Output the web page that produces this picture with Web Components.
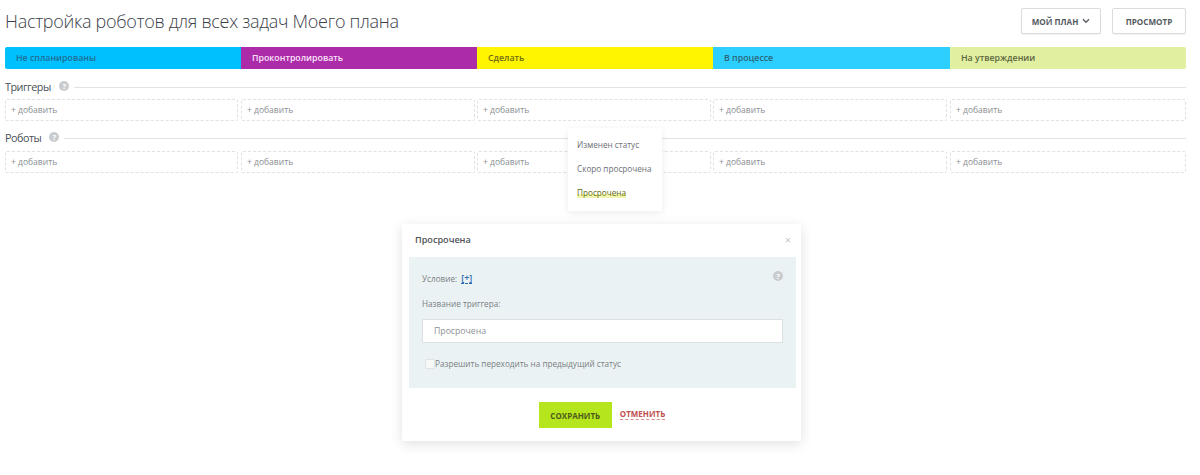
<!DOCTYPE html>
<html lang="ru">
<head>
<meta charset="utf-8">
<title>Настройка роботов</title>
<style>
html, body { margin: 0; background: #fff; }
body { width: 1200px; height: 475px; overflow: hidden; position: relative; font-family: "Open Sans", "Noto Sans", sans-serif; }
</style>
</head>
<body>
<robot-page>
  <page-header title="Настройка роботов для всех задач Моего плана"></page-header>
  <stage-bar></stage-bar>
  <robot-section label="Триггеры" style="--head-top:10px;--cells-top:6px"></robot-section>
  <robot-section label="Роботы" style="--head-top:9px;--cells-top:7px"></robot-section>
</robot-page>
<trigger-menu></trigger-menu>
<trigger-dialog></trigger-dialog>

<script>
const helpIcon = size => `<svg width="${size}" height="${size}" viewBox="0 0 10 10"><circle cx="5" cy="5" r="5" fill="#c9cccf"/><text x="5" y="7.6" font-size="7.5" font-weight="700" text-anchor="middle" fill="#fff" font-family="Open Sans, sans-serif">?</text></svg>`;

class RobotPage extends HTMLElement {
    connectedCallback() {
        this.attachShadow({ mode: 'open' });
        this.shadowRoot.innerHTML = `
            <style>
                :host { display: block; padding: 7px 14px 0 5px; }
            </style>
            <slot></slot>
        `;
    }
}

class PageHeader extends HTMLElement {
    connectedCallback() {
        this.attachShadow({ mode: 'open' });
        this.shadowRoot.innerHTML = `
            <style>
                :host { display: flex; justify-content: space-between; align-items: flex-start; height: 40px; }
                h1 { margin: 2px 0 0; font-size: 18px; letter-spacing: -0.3px; line-height: 24px; font-weight: 300; color: #3b4149; white-space: nowrap; }
                .buttons { display: flex; gap: 11px; }
                .btn {
                    height: 24px; margin-top: 1px; border: 1px solid #d9dcde; border-radius: 2px;
                    display: flex; align-items: center; justify-content: center; gap: 4px;
                    font-size: 8.1px; font-weight: 700; color: #555b61; background: #fff;
                    box-shadow: 0 1px 1px rgba(0,0,0,0.05);
                }
                .my { width: 78px; }
                .view { width: 72px; }
            </style>
            <h1>${this.getAttribute('title')}</h1>
            <div class="buttons">
                <div class="btn my">МОЙ ПЛАН
                    <svg width="8" height="6" viewBox="0 0 8 6"><path d="M1 1.3 L4 4.3 L7 1.3" fill="none" stroke="#555b61" stroke-width="1.3"/></svg>
                </div>
                <div class="btn view">ПРОСМОТР</div>
            </div>
        `;
    }
}

class StageBar extends HTMLElement {
    connectedCallback() {
        const stages = [
            ['Не спланированы', '#00c0fe', '#1f6f96'],
            ['Проконтролировать', '#ab2ba9', '#fbe3fb'],
            ['Сделать', '#fff500', '#6f6a12'],
            ['В процессе', '#2ccfff', '#2d6579'],
            ['На утверждении', '#e1f0a0', '#5d6640']
        ];
        this.attachShadow({ mode: 'open' });
        this.shadowRoot.innerHTML = `
            <style>
                :host { display: grid; grid-template-columns: 236px 236px 236px 237px 236px; height: 22px; border-radius: 2px; overflow: hidden; }
                div { display: flex; align-items: center; padding-left: 11px; font-size: 8.8px; font-weight: 600; white-space: nowrap; }
            </style>
            ${stages.map(s => `<div style="background:${s[1]};color:${s[2]}">${s[0]}</div>`).join('')}
        `;
    }
}

class AddCell extends HTMLElement {
    connectedCallback() {
        this.attachShadow({ mode: 'open' });
        this.shadowRoot.innerHTML = `
            <style>
                :host {
                    display: flex; align-items: center; height: 19px; padding: 0 0 1px 5px;
                    border: 1px dashed #dfe1e3; border-radius: 2px;
                    font-size: 8.5px; color: #8a8e92;
                }
            </style>
            + добавить
        `;
    }
}

class RobotSection extends HTMLElement {
    connectedCallback() {
        this.attachShadow({ mode: 'open' });
        this.shadowRoot.innerHTML = `
            <style>
                :host { display: block; }
                .head { display: flex; align-items: center; height: 14px; margin-top: var(--head-top); font-size: 10.8px; letter-spacing: -0.5px; color: #4a4f55; }
                .head svg { margin-left: 8px; }
                .line { flex: 1; height: 1px; background: #e1e3e5; margin: 2px 0 0 5px; }
                .cells { display: grid; grid-template-columns: 236px 236px 236px 237px 236px; margin-top: var(--cells-top); }
                add-cell { margin-right: 2px; }
                add-cell:first-child, add-cell:nth-child(4) { margin-right: 3px; }
                add-cell:last-child { margin-right: 0; }
            </style>
            <div class="head">${this.getAttribute('label')}${helpIcon(10)}<div class="line"></div></div>
            <div class="cells">
                <add-cell></add-cell><add-cell></add-cell><add-cell></add-cell><add-cell></add-cell><add-cell></add-cell>
            </div>
        `;
    }
}

class TriggerMenu extends HTMLElement {
    connectedCallback() {
        this.attachShadow({ mode: 'open' });
        this.shadowRoot.innerHTML = `
            <style>
                :host {
                    position: absolute; left: 568px; top: 128px; width: 94px; height: 83px; box-sizing: border-box;
                    padding: 4px 0 0 9px; background: #fff; box-shadow: 0 2px 8px rgba(0,0,0,0.08);
                    font-size: 8.2px; color: #6c7076; white-space: nowrap;
                }
                div { height: 24px; display: flex; align-items: center; }
                .on { color: #5f6a10; }
                .on span { background: linear-gradient(transparent 60%, #f2f7b0 60%); }
            </style>
            <div>Изменен статус</div>
            <div>Скоро просрочена</div>
            <div class="on"><span>Просрочена</span></div>
        `;
    }
}

class TriggerDialog extends HTMLElement {
    connectedCallback() {
        this.attachShadow({ mode: 'open' });
        this.shadowRoot.innerHTML = `
            <style>
                :host {
                    position: absolute; left: 402px; top: 224px; width: 399px; height: 217px;
                    background: #fff; box-shadow: 0 3px 12px rgba(0,0,0,0.12);
                    display: flex; flex-direction: column; color: #7a7f84;
                }
                .title { height: 31px; padding: 0 10px 2px 13px; display: flex; align-items: center; justify-content: space-between; font-size: 9.1px; font-weight: 600; color: #4f5459; }
                .close { color: #c6c8ca; font-size: 11px; font-weight: 400; }
                .body { margin: 0 5px 0 7px; height: 131px; box-sizing: border-box; background: #ebf2f3; padding: 15px 13px 0 13px; position: relative; font-size: 8.2px; }
                .help { position: absolute; right: 13px; top: 14px; line-height: 0; }
                .cond { display: flex; gap: 4px; align-items: center; height: 12px; }
                .cond a { color: #2a6bb0; font-size: 9px; font-weight: 600; border-bottom: 1px dashed #2a6bb0; line-height: 11px; }
                .name { margin-top: 14px; height: 12px; line-height: 12px; }
                .input { margin-top: 9px; height: 22px; background: #fff; border: 1px solid #dde1e3; display: flex; align-items: center; padding-left: 11px; font-size: 8.7px; color: #8c9095; }
                .check { display: flex; align-items: center; margin-top: 14px; margin-left: 3px; height: 12px; }
                .box { width: 8px; height: 8px; background: #f7f9f9; border: 1px solid #dfe3e5; border-radius: 1px; margin-top: 2px; }
                .foot { flex: 1; display: flex; align-items: flex-start; justify-content: center; gap: 8px; padding: 14px 0 0 1px; }
                .save { width: 73px; height: 26px; background: #b5e61d; display: flex; align-items: center; justify-content: center; font-size: 8px; font-weight: 700; color: #4d5a1a; }
                .cancel { margin-top: 6px; font-size: 8px; font-weight: 700; color: #c0504d; border-bottom: 1px dashed #d98b88; line-height: 11px; }
            </style>
            <div class="title">Просрочена<span class="close">×</span></div>
            <div class="body">
                <span class="help">${helpIcon(10)}</span>
                <div class="cond">Условие: <a>[+]</a></div>
                <div class="name">Название триггера:</div>
                <div class="input">Просрочена</div>
                <div class="check"><span class="box"></span>Разрешить переходить на предыдущий статус</div>
            </div>
            <div class="foot">
                <div class="save">СОХРАНИТЬ</div>
                <div class="cancel">ОТМЕНИТЬ</div>
            </div>
        `;
    }
}

customElements.define('robot-page', RobotPage);
customElements.define('page-header', PageHeader);
customElements.define('stage-bar', StageBar);
customElements.define('add-cell', AddCell);
customElements.define('robot-section', RobotSection);
customElements.define('trigger-menu', TriggerMenu);
customElements.define('trigger-dialog', TriggerDialog);
</script>
</body>
</html>
